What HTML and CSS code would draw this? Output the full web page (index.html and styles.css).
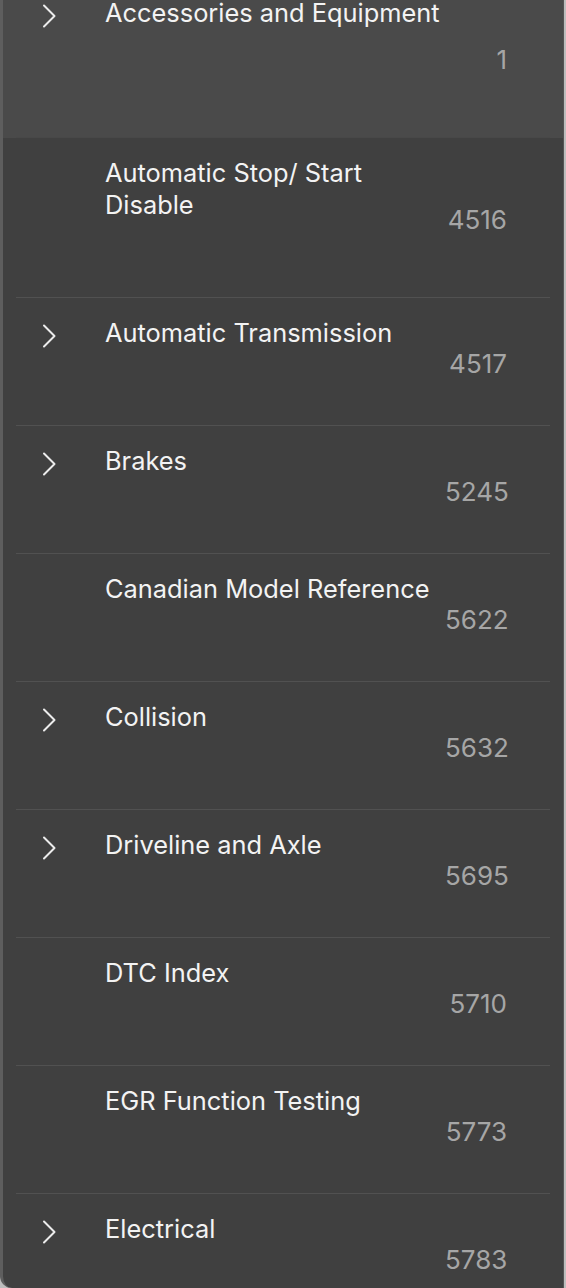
FILE: index.html
```html
<!DOCTYPE html>
<html lang="en">
<head>
    <meta charset="UTF-8">
    <title>Contents</title>
    <link rel="stylesheet" href="styles.css">
</head>

<body>

<div class="panel">
    <ul class="toc">
        <li class="item active">
            <div class="row">
                <span class="arrow"><svg width="16" height="24" viewBox="0 0 16 24"><path d="M3 1.5 L13.5 12 L3 22.5" fill="none" stroke="#ececec" stroke-width="2" stroke-linecap="round" stroke-linejoin="round"/></svg></span>
                <span class="title">Accessories and Equipment</span>
                <span class="page">1</span>
            </div>
        </li>
        <li class="item">
            <div class="row">
                <span class="arrow"></span>
                <span class="title">Automatic Stop/ Start Disable</span>
                <span class="page">4516</span>
            </div>
        </li>
        <li class="item">
            <div class="row">
                <span class="arrow"><svg width="16" height="24" viewBox="0 0 16 24"><path d="M3 1.5 L13.5 12 L3 22.5" fill="none" stroke="#ececec" stroke-width="2" stroke-linecap="round" stroke-linejoin="round"/></svg></span>
                <span class="title">Automatic Transmission</span>
                <span class="page">4517</span>
            </div>
        </li>
        <li class="item">
            <div class="row">
                <span class="arrow"><svg width="16" height="24" viewBox="0 0 16 24"><path d="M3 1.5 L13.5 12 L3 22.5" fill="none" stroke="#ececec" stroke-width="2" stroke-linecap="round" stroke-linejoin="round"/></svg></span>
                <span class="title">Brakes</span>
                <span class="page">5245</span>
            </div>
        </li>
        <li class="item">
            <div class="row">
                <span class="arrow"></span>
                <span class="title">Canadian Model Reference</span>
                <span class="page">5622</span>
            </div>
        </li>
        <li class="item">
            <div class="row">
                <span class="arrow"><svg width="16" height="24" viewBox="0 0 16 24"><path d="M3 1.5 L13.5 12 L3 22.5" fill="none" stroke="#ececec" stroke-width="2" stroke-linecap="round" stroke-linejoin="round"/></svg></span>
                <span class="title">Collision</span>
                <span class="page">5632</span>
            </div>
        </li>
        <li class="item">
            <div class="row">
                <span class="arrow"><svg width="16" height="24" viewBox="0 0 16 24"><path d="M3 1.5 L13.5 12 L3 22.5" fill="none" stroke="#ececec" stroke-width="2" stroke-linecap="round" stroke-linejoin="round"/></svg></span>
                <span class="title">Driveline and Axle</span>
                <span class="page">5695</span>
            </div>
        </li>
        <li class="item">
            <div class="row">
                <span class="arrow"></span>
                <span class="title">DTC Index</span>
                <span class="page">5710</span>
            </div>
        </li>
        <li class="item">
            <div class="row">
                <span class="arrow"></span>
                <span class="title">EGR Function Testing</span>
                <span class="page">5773</span>
            </div>
        </li>
        <li class="item">
            <div class="row">
                <span class="arrow"><svg width="16" height="24" viewBox="0 0 16 24"><path d="M3 1.5 L13.5 12 L3 22.5" fill="none" stroke="#ececec" stroke-width="2" stroke-linecap="round" stroke-linejoin="round"/></svg></span>
                <span class="title">Electrical</span>
                <span class="page">5783</span>
            </div>
        </li>
    </ul>
</div>

</body>
</html>
```

FILE: styles.css
```css
*{
    margin:0;
    padding:0;
    box-sizing: border-box;
}
html, body{
    height: 100%;
}
body{
    background: #bdbdbd;
    font-family: Inter, "Liberation Sans", sans-serif;
    overflow: hidden;
}
li{
    list-style-type: none;
}
.panel{
    width: 564px;
    height: 1288px;
    background: #404040;
    border-left: 3px solid #5e5e5e;
    border-right: 1px solid #555;
    border-bottom-left-radius: 12px;
    overflow: hidden;
}
.toc{
    margin-top: -22px;
}
.item{
    padding: 0 13px;
}
.item.active{
    background: #4a4a4a;
}
.row{
    display: grid;
    grid-template-columns: 89px 340px 1fr;
    border-bottom: 1px solid #515151;
}
.item.active .row{
    border-bottom-color: #484848;
}
.arrow{
    height: 32px;
    margin-top: 22px;
    padding-left: 25px;
    display: flex;
    align-items: center;
}
.arrow svg{
    display: block;
}
.title{
    padding: 19px 0 76px;
    font-size: 25.4px;
    line-height: 32px;
    color: #f3f3f3;
}
.item.active .title{
    padding-bottom: 108px;
}
.page{
    align-self: center;
    text-align: right;
    padding-top: 3px;
    padding-right: 43px;
    font-size: 26px;
    color: #a6a6a6;
}
```
